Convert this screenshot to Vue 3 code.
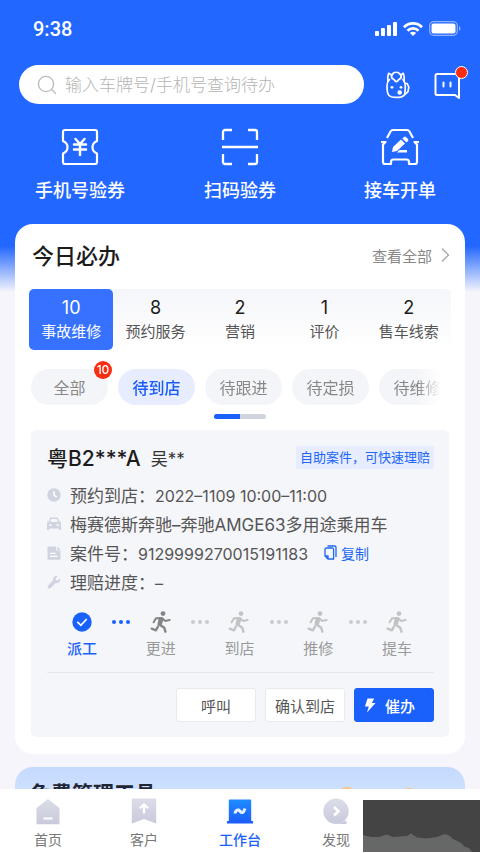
<script setup>
import { ref } from 'vue'

const categories = [
  { count: 10, name: '事故维修' },
  { count: 8, name: '预约服务' },
  { count: 2, name: '营销' },
  { count: 1, name: '评价' },
  { count: 2, name: '售车线索' },
]
const activeCategory = ref(0)

const filters = [
  { name: '全部', badge: 10 },
  { name: '待到店' },
  { name: '待跟进' },
  { name: '待定损' },
  { name: '待维修' },
]
const activeFilter = ref(1)

const steps = [
  { name: '派工', state: 'done' },
  { name: '更进', state: 'next' },
  { name: '到店', state: 'todo' },
  { name: '推修', state: 'todo' },
  { name: '提车', state: 'todo' },
]
</script>

<template>
  <div class="app">
    <main class="scroll">
      <div class="status">
        <span class="time">9:38</span>
        <span class="signals">
          <svg width="22" height="14" viewBox="0 0 22 14" fill="#fff">
            <rect x="0" y="9" width="4" height="5" rx="1" />
            <rect x="6" y="6" width="4" height="8" rx="1" />
            <rect x="12" y="3" width="4" height="11" rx="1" />
            <rect x="18" y="0" width="4" height="14" rx="1" />
          </svg>
          <svg width="20" height="14" viewBox="0 0 20 14" fill="none" stroke="#fff" stroke-width="2.7">
            <path d="M1 5.2C6 .2 14 .2 19 5.2" />
            <path d="M4.500 8.700c3-3 8-3 11 0" />
            <path d="M10 14 6.900 11c1.800-1.600 4.400-1.600 6.200 0z" fill="#fff" stroke="none" />
          </svg>
          <svg width="32" height="15" viewBox="0 0 32 15">
            <rect x=".7" y=".7" width="27.6" height="13.6" rx="4" fill="none" stroke="#fff" stroke-opacity=".5" stroke-width="1.2" />
            <rect x="2.5" y="2.5" width="24" height="10" rx="2" fill="#fff" />
            <path d="M30 5c2 1 2 4 0 5z" fill="#fff" fill-opacity=".5" />
          </svg>
        </span>
      </div>

      <div class="searchbar">
        <label class="search">
          <svg width="20" height="20" viewBox="0 0 20 20" fill="none" stroke="#bdbdbd" stroke-width="1.4" stroke-linecap="round">
            <circle cx="9" cy="9" r="7.6" />
            <path d="m14.6 14.6 4 4" />
          </svg>
          <input type="search" placeholder="输入车牌号/手机号查询待办" aria-label="输入车牌号/手机号查询待办" />
        </label>
        <button class="icon-btn" aria-label="客服">
          <svg width="26" height="28" viewBox="0 0 26 28" fill="none" stroke="#fff" stroke-width="1.7" stroke-linecap="round" stroke-linejoin="round">
            <path d="M4.500 8.500C2.400 10.500 2 12 2 15c0 4 .2 7.500 1.800 9.300 2.500 2.800 12.500 2.900 15.200 0 1.300-1.500 1.300-5.300 1.300-9.300 0-3-.5-4.500-2.300-6.500" />
            <path d="M2.900 10.500C2.500 7 2.700 4.500 3.600 2.300L6.500 4M19.100 10.500c.4-3.500.1-6-.8-8.200L15.800 4" />
            <path d="M8.300 2.200C9.800.900 12.700.9 14 2.200c1.500 1 2.400 2.600 2.200 4.300-.8 1.500-2.500 1.600-3.500 3.400-.8 1-1.800 1-2.600 0-1-1.800-2.700-1.900-3.500-3.400C6.400 4.800 6.800 3.200 8.300 2.200z" />
            <path d="M20.500 12.500h1.700l1.600 3.700-.8 4.500-3 2.600" />
            <g fill="#fff" stroke="none">
              <circle cx="7" cy="16.300" r="1.400" /><circle cx="16" cy="16.300" r="1.400" />
              <circle cx="14.700" cy="21.500" r="2.300" />
            </g>
          </svg>
        </button>
        <button class="icon-btn" aria-label="消息">
          <svg width="26" height="28" viewBox="0 0 26 28" fill="none" stroke="#fff" stroke-width="2" stroke-linecap="round" stroke-linejoin="round">
            <path d="M3 3h20.500a1.500 1.500 0 0 1 1.500 1.500V27l-4-3H3a1.500 1.500 0 0 1-1.500-1.500v-18A1.500 1.500 0 0 1 3 3z" />
            <path d="M9.500 11.500v4M16.500 11.500v4" />
          </svg>
          <span class="dot"></span>
        </button>
      </div>

      <nav class="shortcuts">
        <a href="#coupon">
          <svg width="40" height="38" viewBox="0 0 40 38" fill="none" stroke="#fff" stroke-width="2.200" stroke-linecap="round" stroke-linejoin="round">
            <path d="M5 2h30a2 2 0 0 1 2 2v9c-6 2.500-6 10 0 12.500V34a2 2 0 0 1-2 2H5a2 2 0 0 1-2-2v-8.500C9 23 9 15.500 3 13V4a2 2 0 0 1 2-2z" />
            <path d="m15.500 11 4.500 5 4.500-5M14 16.500h12M14 21.500h12M20 16.500V27" stroke-width="2.500" />
          </svg>
          手机号验券
        </a>
        <a href="#scan">
          <svg width="40" height="38" viewBox="0 0 40 38" fill="none" stroke="#fff" stroke-width="2.300">
            <path d="M3 12V4a2 2 0 0 1 2-2h7M28 2h7a2 2 0 0 1 2 2v8M37 26v8a2 2 0 0 1-2 2h-7M12 36H5a2 2 0 0 1-2-2v-8M2 19h36" />
          </svg>
          扫码验券
        </a>
        <a href="#order">
          <svg width="40" height="38" viewBox="0 0 40 38" fill="none" stroke="#fff" stroke-width="2.200" stroke-linejoin="round">
            <path d="M7 10 10.500 3.500A3 3 0 0 1 13 2h14a3 3 0 0 1 2.500 1.500L33 10" />
            <path d="M1 14h4.500L3 16.500V34a2 2 0 0 0 2 2h6v-2a2.500 2.500 0 0 1 2.500-2.500h13a2.500 2.500 0 0 1 2.500 2.500v2h6a2 2 0 0 0 2-2V16.500L34.500 14H39" />
            <path d="m12 24 1-5 8-7.500 4 4-8 7.500zM22.300 10.500 24 9a1.500 1.500 0 0 1 2 0l2 2a1.500 1.500 0 0 1 0 2l-1.600 1.500z" fill="#fff" stroke="none" />
            <path d="m17 24.500 2.500-2.500H27v2.500z" fill="#fff" stroke="none" />
          </svg>
          接车开单
        </a>
      </nav>

      <section class="card">
        <header class="card-head">
          <h1>今日必办</h1>
          <a href="#all" class="more">
            查看全部
            <svg width="9" height="16" viewBox="0 0 9 16" fill="none" stroke="#a8a8a8" stroke-width="1.300"><path d="m1 1.500 6.500 6.500L1 14.500" /></svg>
          </a>
        </header>

        <div class="categories">
          <button v-for="(c, i) in categories" :key="c.name" :class="{ active: i === activeCategory }" @click="activeCategory = i">
            <b>{{ c.count }}</b>
            <span>{{ c.name }}</span>
          </button>
        </div>

        <div class="filters">
          <button v-for="(f, i) in filters" :key="f.name" :class="{ active: i === activeFilter }" @click="activeFilter = i">
            {{ f.name }}
            <span v-if="f.badge" class="badge">{{ f.badge }}</span>
          </button>
        </div>
        <div class="pager"><i></i></div>

        <article class="claim">
          <header class="claim-head">
            <h2>粤B2***A</h2>
            <span class="owner">吴**</span>
            <span class="tag">自助案件，可快速理赔</span>
          </header>

          <ul class="facts">
            <li>
              <svg width="14" height="14" viewBox="0 0 14 14"><circle cx="7" cy="7" r="6.700" fill="#d0d3e0" /><path d="M7 3.200V7.200l2.600 2" fill="none" stroke="#fff" stroke-width="1.500" /></svg>
              <p>预约到店：<span>2022–1109 10:00–11:00</span></p>
            </li>
            <li>
              <svg width="14" height="14" viewBox="0 0 14 14"><path fill="#d0d3e0" fill-rule="evenodd" d="M3.300.500h7.400l1.500 4H14v1.300h-.7l.7 1.200v6h-2.200v-1.500H2.200V13H0V7l.7-1.200H0V4.500h1.800zM4.200 1.900l-1 3.100h7.600l-1-3.100zM2 7.300v1.600h2.600V7.300zm7.400 0v1.600H12V7.300z" /></svg>
              <p>梅赛德斯奔驰–奔驰AMGE63多用途乘用车</p>
            </li>
            <li>
              <svg width="14" height="14" viewBox="0 0 14 14"><path fill="#d0d3e0" d="M1 .5h8v4h4.500V13a.7.7 0 0 1-.7.700H1.200a.7.7 0 0 1-.7-.7V1A.5.5 0 0 1 1 .5zM10 .5 13.500 3.700H10z" /><path d="M3 7.300h5.500M3 10.300h7.500" stroke="#fff" stroke-width="1.300" /></svg>
              <p>案件号：<span>9129999270015191183</span></p>
              <button class="copy">
                <svg width="13" height="15" viewBox="0 0 13 15" fill="none" stroke="#2166f5" stroke-width="1.300"><path d="M3.500 1h7a1.500 1.500 0 0 1 1.500 1.500v9.500" /><path d="M2.300 3h6a1.300 1.300 0 0 1 1.300 1.300V14H4L1 11V4.300A1.300 1.300 0 0 1 2.300 3zM1 11h3v3" /></svg>
                复制
              </button>
            </li>
            <li>
              <svg width="14" height="14" viewBox="0 0 14 14"><path fill="#d0d3e0" d="M10.800.9 8.600 3.200l.3 1.900 1.900.3 2.300-2.200c1 2.800-1.300 5.600-4.500 4.900l-5 4.900C1.900 14.500-.3 12.300 1.100 10.600l4.900-5C5.300 2.600 7.900-.1 10.800.9z" /></svg>
              <p>理赔进度：<span>–</span></p>
            </li>
          </ul>

          <ol class="steps">
            <template v-for="(s, i) in steps" :key="s.name">
              <li v-if="i" class="link" :class="{ on: i === 1 }" aria-hidden="true"><i></i><i></i><i></i></li>
              <li class="step" :class="s.state">
                <svg v-if="s.state === 'done'" width="22" height="22" viewBox="0 0 22 22"><circle cx="11" cy="11" r="9.700" fill="#1a61fb" /><path d="m6.300 10.800 3.600 3.500L15.700 8" fill="none" stroke="#fff" stroke-width="1.700" /></svg>
                <svg v-else width="22" height="22" viewBox="0 0 22 22" fill="none" stroke="currentColor" stroke-linecap="round" stroke-linejoin="round">
                  <circle cx="13" cy="2.600" r="2.400" fill="currentColor" stroke="none" />
                  <path d="M9.500 7.200 8.200 13.500l2.600.8 2-6z" fill="currentColor" stroke-width="1.500" />
                  <path d="M3.600 11.300 6 7.200l6-.3 3 3 4.700-1" stroke-width="2" />
                  <path d="m9.500 13.500 4.700 3.200 1.200 4M8 15.500l-2 3.800-4.300-1.600" stroke-width="2.400" />
                </svg>
                <span>{{ s.name }}</span>
              </li>
            </template>
          </ol>

          <footer class="actions">
            <button>呼叫</button>
            <button>确认到店</button>
            <button class="primary">
              <svg width="12" height="15" viewBox="0 0 12 15"><path d="M3.500.5h6.700L7.800 5H11.500L3 14.500 4.800 8.500H1z" fill="#fff" /></svg>
              催办
            </button>
          </footer>
        </article>
      </section>

      <section class="promo">
        <h2>免费管理工具</h2>
        <svg class="art" width="96" height="10" viewBox="0 0 96 10">
          <ellipse cx="18" cy="5" rx="7" ry="4" fill="#f6c58c" /><ellipse cx="19" cy="5" rx="3" ry="2" fill="#f08352" />
          <ellipse cx="80" cy="6" rx="8" ry="4" fill="#f6c58c" /><ellipse cx="78" cy="5" rx="3" ry="2" fill="#f08352" />
        </svg>
      </section>
    </main>

    <nav class="tabbar">
      <a href="#home">
        <svg width="28" height="28" viewBox="0 0 28 28"><defs><linearGradient id="grey" x2="0" y2="1"><stop stop-color="#dcdde9" /><stop offset="1" stop-color="#c8cadb" /></linearGradient></defs><path d="M14 1 25.500 10v15.500a.7.7 0 0 1-.7.700H3.200a.7.7 0 0 1-.7-.7V10z" fill="url(#grey)" /><path d="M9.500 20.500h9" stroke="#fff" stroke-width="2" /></svg>
        首页
      </a>
      <a href="#clients">
        <svg width="28" height="28" viewBox="0 0 28 28"><path d="M2.500.500h23a.7.7 0 0 1 .7.700V25.500L14 21 1.800 25.500V1.200a.7.7 0 0 1 .7-.7z" fill="url(#grey)" /><path d="M14 15.500V7M9.800 10.300 14 6.300l4.200 4" fill="none" stroke="#fff" stroke-width="2.200" /></svg>
        客户
      </a>
      <a href="#desk" class="current">
        <svg width="28" height="28" viewBox="0 0 28 28"><defs><linearGradient id="blue" x2="0" y2="1"><stop stop-color="#1e8cff" /><stop offset="1" stop-color="#1b5cff" /></linearGradient></defs><path d="M3.500 1.500h21a.7.7 0 0 1 .7.700V23H27v2.500H1V23h1.800V2.200a.7.7 0 0 1 .7-.7z" fill="url(#blue)" /><path d="M9 15.500c.5-2.500 2-4 3.500-3.500 1.500.6 2 3 4 2.500 1.300-.3 1.700-2 2.500-4" fill="none" stroke="#fff" stroke-opacity=".9" stroke-width="3" stroke-linejoin="round" /></svg>
        工作台
      </a>
      <a href="#find">
        <svg width="28" height="28" viewBox="0 0 28 28"><path d="M14 .5a12.700 12.700 0 1 1 0 25.400H24.500V23L22 23A12.700 12.700 0 0 1 14 25.900 12.700 12.700 0 0 1 14 .5z" fill="url(#grey)" /><path d="m12 9 4.500 4.300L12 17.500" fill="none" stroke="#fff" stroke-width="2.600" /></svg>
        发现
      </a>
      <svg class="cover" viewBox="0 0 117 52" preserveAspectRatio="none">
        <path d="M0 0h117v52H0z" fill="#444" />
        <path d="M0 35 8 37H16L24 34.500 30 37 44 36 48 33.500 54 37.500 63 38.500 74 37 82 34 87 36 90 39 98 43 102 47 106 48 109 52H0z" fill="#666867" />
      </svg>
    </nav>
  </div>
</template>

<style>
body {
  margin: 0;
}
</style>

<style scoped>
.app {
  display: flex;
  flex-direction: column;
  height: 100vh;
  overflow: hidden;
  color: #1c1c1c;
  font-family: Inter, "Noto Sans CJK SC", sans-serif;
  background: linear-gradient(#2267ff 0, #2267ff 246px, #f5f5fb 292px);
}
.app * {
  box-sizing: border-box;
}
button {
  margin: 0;
  padding: 0;
  border: 0;
  background: none;
  font: inherit;
  color: inherit;
  cursor: pointer;
}
a {
  color: inherit;
  text-decoration: none;
}
h1,
h2,
p,
ul,
ol {
  margin: 0;
  padding: 0;
  list-style: none;
}
svg {
  flex: none;
  display: block;
}
.scroll {
  flex: 1;
  min-height: 0;
  overflow: hidden;
}
.status {
  display: flex;
  align-items: center;
  justify-content: space-between;
  height: 57px;
  padding: 0 19px 0 33px;
  color: #fff;
}
.time {
  font-family: Roboto, sans-serif;
  font-size: 20px;
  font-weight: 500;
}
.signals {
  display: flex;
  align-items: center;
  gap: 6px;
}
.searchbar {
  display: flex;
  align-items: center;
  gap: 23px;
  margin-top: 8px;
  padding: 0 20px 0 19px;
}
.search {
  display: flex;
  flex: 1;
  align-items: center;
  gap: 8px;
  min-width: 0;
  height: 39px;
  margin-right: -2px;
  padding: 0 18px;
  border-radius: 20px;
  background: #fff;
}
.search input {
  flex: 1;
  min-width: 0;
  padding: 0;
  border: 0;
  outline: 0;
  background: none;
  font: 300 17px Inter, "Noto Sans CJK SC", sans-serif;
}
.search input::placeholder {
  color: #b5b5b5;
}
.icon-btn {
  position: relative;
}
.dot {
  position: absolute;
  top: -5px;
  right: -8px;
  width: 13px;
  height: 13px;
  border: 1px solid #fff;
  border-radius: 50%;
  background: #fb2b12;
}
.shortcuts {
  display: grid;
  grid-template-columns: repeat(3, 1fr);
  margin-top: 24px;
}
.shortcuts a {
  display: flex;
  flex-direction: column;
  align-items: center;
  gap: 12px;
  color: #fff;
  font-size: 18px;
  font-weight: 500;
  line-height: 26px;
}
.card {
  margin: 20px 15px 0;
  padding: 12px 14px 17px;
  border-radius: 18px;
  background: #fff;
}
.card-head {
  display: flex;
  align-items: center;
  justify-content: space-between;
  height: 36px;
  padding: 0 1px 0 3px;
}
.card-head h1 {
  font-size: 22px;
  font-weight: 500;
}
.more {
  display: flex;
  align-items: center;
  gap: 9px;
  margin-top: 2px;
  color: #888;
  font-size: 15px;
}
.categories {
  display: grid;
  grid-template-columns: repeat(5, 1fr);
  margin-top: 17px;
  border-radius: 5px;
  background: linear-gradient(#f5f6fa, #fff);
}
.categories button {
  display: flex;
  flex-direction: column;
  align-items: center;
  height: 61px;
  padding-top: 7px;
  border-radius: 5px;
  color: #555;
  font-size: 15px;
  line-height: 24px;
  white-space: nowrap;
}
.categories b {
  color: #1c1c1c;
  font-size: 18px;
  font-weight: 400;
}
.categories .active,
.categories .active b {
  background: #3672ff;
  color: #fff;
}
.filters {
  display: flex;
  gap: 10px;
  margin: 7px 10px 0 2px;
  padding-top: 12px;
  overflow: hidden;
  mask-image: linear-gradient(to right, #000 calc(100% - 24px), transparent);
}
.filters button {
  position: relative;
  flex: none;
  width: 77px;
  height: 36px;
  border-radius: 18px;
  background: #f4f5f8;
  color: #888;
  font-size: 16px;
}
.filters .active {
  background: #e7edff;
  color: #1a5df5;
  font-weight: 500;
}
.badge {
  position: absolute;
  top: -8px;
  right: -4px;
  width: 18px;
  height: 18px;
  border-radius: 50%;
  background: #f92d12;
  color: #fff;
  font-size: 12px;
  font-weight: 500;
  line-height: 18px;
}
.pager {
  width: 52px;
  height: 5px;
  margin: 9px auto 0;
  border-radius: 3px;
  background: #d0d4dd;
  overflow: hidden;
}
.pager i {
  display: block;
  width: 50%;
  height: 100%;
  background: #1a61fb;
}
.claim {
  margin: 11px 2px 0;
  padding: 13px 15px 15px 16px;
  border-radius: 5px;
  background: #f5f6fa;
}
.claim-head {
  display: flex;
  align-items: center;
  height: 28px;
}
.claim-head h2 {
  font-size: 21px;
  font-weight: 500;
}
.owner {
  margin-left: 10px;
  color: #333;
  font-size: 17px;
}
.tag {
  margin-left: auto;
  padding: 0 4px;
  border-radius: 2px;
  background: #e7edff;
  color: #2166f5;
  font-size: 13px;
  line-height: 23px;
}
.facts {
  margin-top: 9px;
}
.facts li {
  display: flex;
  align-items: center;
  gap: 9px;
  height: 29px;
  color: #555;
  font-size: 17px;
  white-space: nowrap;
}
.facts p span {
  font-size: 16px;
}
.copy {
  display: flex;
  align-items: center;
  gap: 4px;
  margin-left: 7px;
  color: #2166f5;
  font-size: 14px;
}
.steps {
  display: flex;
  justify-content: space-between;
  margin-top: 15px;
  padding: 0 22px 0 20px;
}
.step {
  display: flex;
  flex-direction: column;
  align-items: center;
  gap: 4px;
  color: #c3c3c5;
  font-size: 15px;
  line-height: 24px;
}
.step span {
  color: #999;
}
.next {
  color: #858585;
}
.done span {
  color: #1a61fb;
  font-weight: 500;
}
.link {
  display: flex;
  align-items: center;
  gap: 3px;
  height: 22px;
  color: #c9cacd;
}
.link i {
  width: 4px;
  height: 4px;
  border-radius: 50%;
  background: currentColor;
}
.link.on {
  color: #1a61fb;
}
.actions {
  display: flex;
  justify-content: flex-end;
  gap: 9px;
  margin-top: 11px;
  padding-top: 15px;
  border-top: 1px solid #e6e7ea;
}
.actions button {
  width: 80px;
  height: 34px;
  border: 1px solid #e8eaed;
  border-radius: 3px;
  background: #fff;
  color: #555;
  font-size: 15px;
}
.actions .primary {
  display: flex;
  align-items: center;
  gap: 9px;
  padding-left: 9px;
  border-color: #1a61fb;
  background: #1a61fb;
  color: #fff;
  font-weight: 500;
}
.promo {
  display: flex;
  justify-content: space-between;
  margin: 13px 15px 0;
  padding: 12px 40px 12px 15px;
  border-radius: 18px;
  background: linear-gradient(#c3dafe, #d5e5ff 40px);
}
.promo h2 {
  color: #1f2635;
  font-size: 21px;
  font-weight: 700;
  line-height: 30px;
}
.art {
  margin-top: 7px;
}
.tabbar {
  position: relative;
  display: grid;
  grid-template-columns: repeat(5, 1fr);
  flex: none;
  height: 64px;
  padding-top: 9px;
  background: #fff;
}
.tabbar a {
  display: flex;
  flex-direction: column;
  align-items: center;
  gap: 3px;
  color: #777;
  font-size: 14px;
  line-height: 22px;
}
.tabbar .current {
  color: #1a61fb;
  font-weight: 500;
}
.cover {
  position: absolute;
  right: 0;
  bottom: 1px;
  width: 117px;
  height: 52px;
}
</style>
